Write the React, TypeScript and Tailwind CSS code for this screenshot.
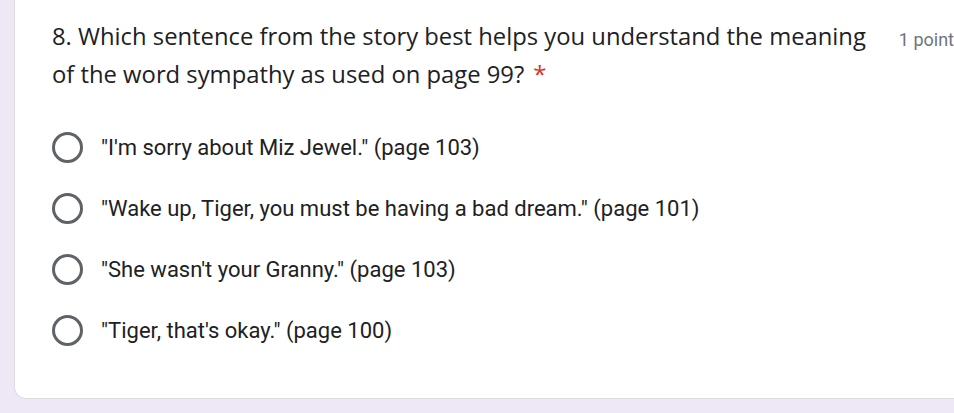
import { forwardRef } from "react";

type Option = { label: string };

const options: Option[] = [
  { label: '"I\'m sorry about Miz Jewel." (page 103)' },
  { label: '"Wake up, Tiger, you must be having a bad dream." (page 101)' },
  { label: '"She wasn\'t your Granny." (page 103)' },
  { label: '"Tiger, that\'s okay." (page 100)' },
];

const Radio = forwardRef<HTMLSpanElement, {}>(function Radio(_props, ref) {
  return (
    <span
      ref={ref}
      className="block w-[31px] h-[31px] shrink-0 rounded-full border-[3px] border-[#5f6368]"
    />
  );
});

export default function App() {
  return (
    <div className="w-[954px] h-[413px] overflow-hidden bg-[#ede7f6] pl-[14px]">
      <div
        className="h-[399px] bg-white rounded-bl-[12px] border-l border-b border-[#dadce0] pl-[37px] pt-[17px]"
        style={{ fontFamily: "Roboto, 'Liberation Sans', sans-serif" }}
      >
        <div className="flex items-start">
          <div
            className="w-[830px] text-[23.8px] leading-[38px] text-[#202124]"
            style={{ fontFamily: "'Open Sans', Roboto, sans-serif" }}
          >
            8. Which sentence from the story best helps you understand the meaning of the word sympathy as used
            on page 99?<span className="ml-[9px] text-[#d93025]">*</span>
          </div>
          <div className="ml-[18px] pt-[9px] whitespace-nowrap text-[18px] text-[#70757a]">1 point</div>
        </div>

        <div className="mt-[39px] flex flex-col gap-[30px]">
          {options.map((o, i) => (
            <label key={i} className="flex items-center h-[31px]">
              <Radio />
              <span className="ml-[18px] text-[22px] text-[#202124] whitespace-nowrap">{o.label}</span>
            </label>
          ))}
        </div>
      </div>
    </div>
  );
}
